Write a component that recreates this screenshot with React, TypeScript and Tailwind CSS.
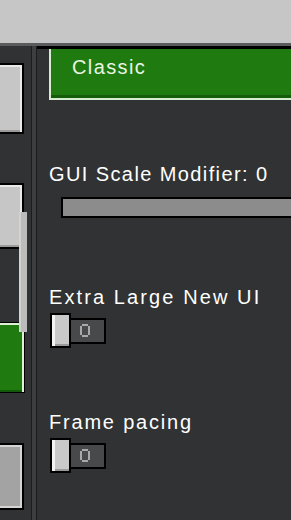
function Ring() {
  return (
    <svg width="10" height="13" viewBox="0 0 10 13" className="block">
      <rect x="2" y="0" width="6" height="2" fill="#a9a9a9" />
      <rect x="2" y="11" width="6" height="2" fill="#a9a9a9" />
      <rect x="0" y="2" width="2" height="9" fill="#a9a9a9" />
      <rect x="8" y="2" width="2" height="9" fill="#a9a9a9" />
    </svg>
  );
}

function Toggle({ className }: { className: string }) {
  return (
    <div className={`ml-[13px] flex items-center ${className}`}>
      <div className="relative z-10 h-[35px] w-[21px] border-2 border-black bg-[#c9c9c9] shadow-[inset_3px_0_0_#f2f2f2,inset_0_-2px_0_#9a9a9a]" />
      <div className="-ml-[2px] flex h-[26px] w-[37px] items-center border-2 border-black bg-[#48494a] pl-[9px]">
        <Ring />
      </div>
    </div>
  );
}

export default function App() {
  return (
    <div className="flex h-[520px] w-[291px] flex-col overflow-hidden bg-[#313233] font-['Liberation_Sans',sans-serif] text-[20px] leading-[20px] tracking-[1.4px] text-white">
      <div className="h-[43px] shrink-0 bg-[#c6c6c6]" />
      <div className="h-[3px] shrink-0 bg-[#5a5b5c]" />
      <div className="flex min-h-0 flex-1">
        <div className="relative w-[31px] shrink-0 bg-[#313233]">
          <div className="mt-[17px] h-[71px] w-[24px] border-y-2 border-r-2 border-black bg-[#c6c6c6] shadow-[inset_-2px_2px_0_#e9e9e9,inset_0_-2px_0_#9b9b9b]" />
          <div className="mt-[49px] h-[66px] w-[24px] border-y-2 border-r-2 border-black bg-[#c6c6c6] shadow-[inset_-2px_2px_0_#e9e9e9,inset_0_-2px_0_#9b9b9b]" />
          <div className="mt-[73px] h-[71px] w-[25px] border-y border-r border-black bg-[#1f7b10] shadow-[inset_-2px_2px_0_#dff0d8,inset_0_-2px_0_#135a0a]" />
          <div className="mt-[50px] h-[67px] w-[24px] border-y-2 border-r-2 border-black bg-[#a3a3a3] shadow-[inset_-2px_2px_0_#d4d4d4,inset_0_-2px_0_#d4d4d4]" />
          <div className="absolute left-[19px] top-[166px] h-[120px] w-[8px] bg-[#bcbcbc] shadow-[inset_2px_0_0_#d2d2d2]" />
        </div>
        <div className="w-px shrink-0 bg-[#1c1c1d]" />
        <div className="w-[4px] shrink-0 bg-[#3d3e40]" />
        <div className="w-px shrink-0 bg-[#1c1c1d]" />
        <div className="flex min-w-0 flex-1 flex-col border-t-[3px] border-black">
          <div className="ml-[12px] h-[51px] border-b-2 border-l-2 border-[#d6ecd0] bg-[#1f7b10] pl-[21px] pt-[8px] text-[#eaf5e4] shadow-[inset_0_-3px_0_#145c0a]">
            Classic
          </div>
          <div className="ml-[12px] mt-[64px] whitespace-nowrap">GUI Scale Modifier: 0</div>
          <div className="ml-[24px] mt-[13px] h-[21px] border-2 border-r-0 border-black bg-[#8c8c8c]" />
          <div className="ml-[12px] mt-[69px] whitespace-nowrap tracking-[2.1px]">Extra Large New UI</div>
          <Toggle className="mt-[6px]" />
          <div className="ml-[12px] mt-[64px] whitespace-nowrap tracking-[1.8px]">Frame pacing</div>
          <Toggle className="mt-[6px]" />
        </div>
      </div>
    </div>
  );
}
